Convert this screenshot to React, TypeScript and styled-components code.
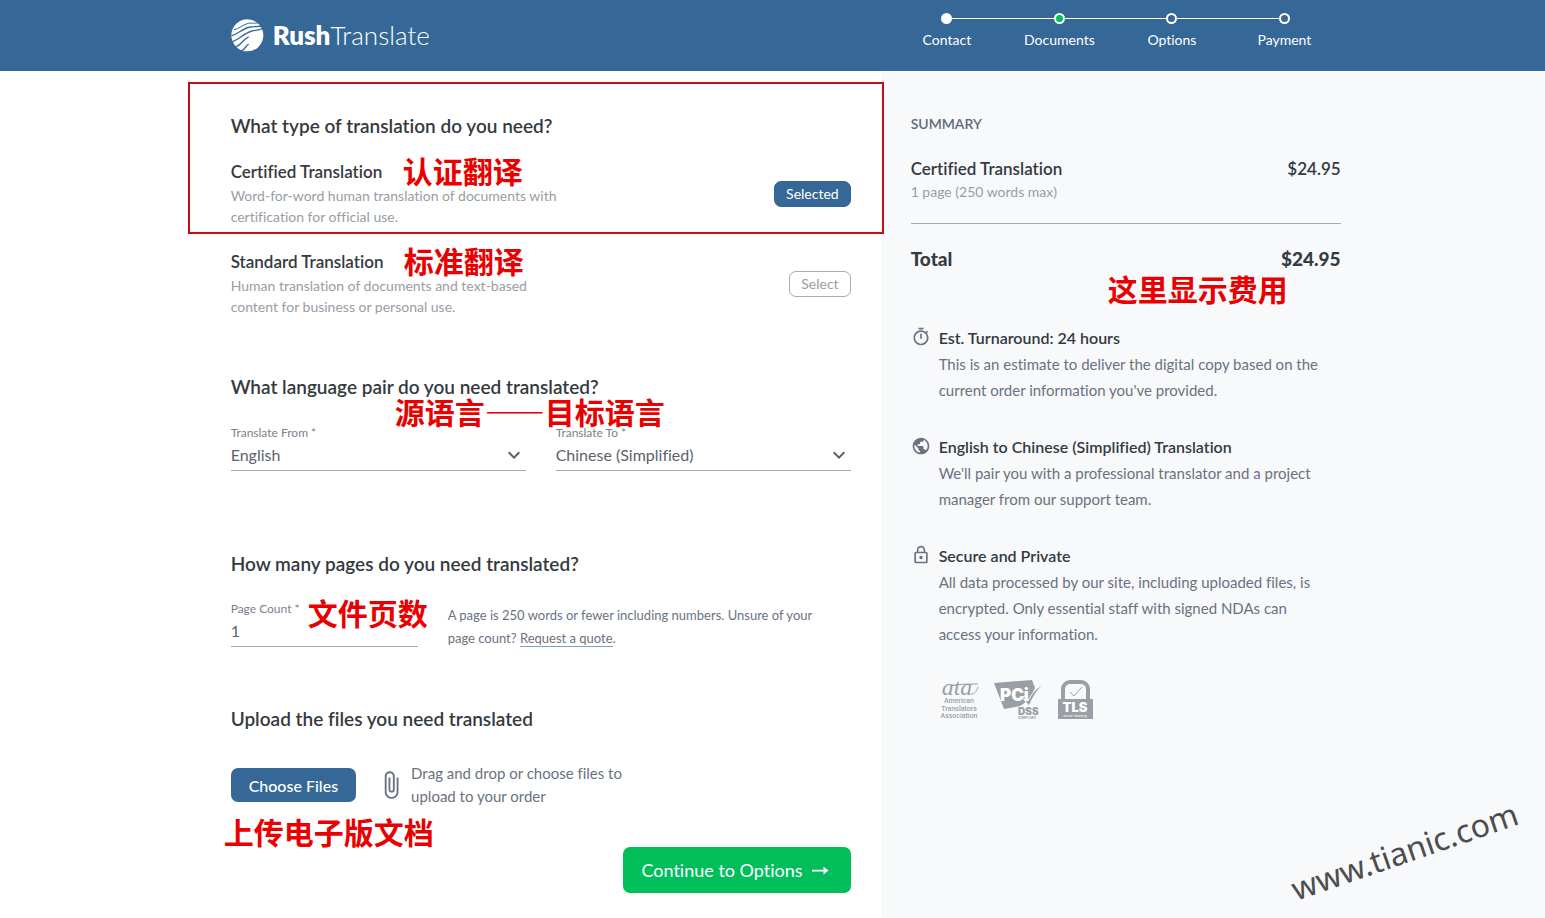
import React from 'react';
import styled, { createGlobalStyle, css } from 'styled-components';
import {
  MdAttachFile,
  MdKeyboardArrowDown,
  MdLockOutline,
  MdOutlineTimer,
  MdPublic,
} from 'react-icons/md';

const blue = '#356896';
const ink = '#343a40';
const muted = '#989da5';
const slate = '#6a7280';
const line = '#a3abb8';
const red = '#ea0000';

const GlobalStyle = createGlobalStyle`
  *, *::before, *::after { box-sizing: border-box; }
  body {
    margin: 0;
    background: #fff;
    color: ${ink};
    font-family: Lato, "Noto Sans CJK SC", sans-serif;
    font-size: 16px;
    font-variant-ligatures: none;
  }
  button, input, select { font: inherit; font-variant-ligatures: none; }
  h1, h2, h3, p, ol, ul, dl, dd { margin: 0; padding: 0; }
  ol, ul { list-style: none; }
`;

const Page = styled.div`
  position: relative;
  display: flex;
  flex-direction: column;
  min-height: 100vh;
  overflow: hidden;
`;

const columns = css`
  display: grid;
  grid-template-columns: 57% 43%;
`;

const Header = styled.header`
  ${columns}
  min-height: 71px;
  background: ${blue};
  color: #fff;
`;

const BrandColumn = styled.div`
  display: flex;
  justify-content: flex-end;
  padding-right: 30px;
`;

const BrandRow = styled.div`
  display: flex;
  align-items: center;
  width: 100%;
  max-width: 620px;
`;

const Brand = styled.a`
  display: flex;
  align-items: center;
  gap: 9px;
  color: #fff;
  font-size: 26px;
  font-weight: 300;
  line-height: 30px;
  text-decoration: none;

  strong { font-weight: 800; }
  span { padding-bottom: 2px; }
`;

const Steps = styled.ol`
  display: grid;
  grid-template-columns: repeat(4, 1fr);
  width: 100%;
  max-width: 460px;
  padding: 13px 0 0 10px;
`;

const Step = styled.li`
  position: relative;
  display: flex;
  flex-direction: column;
  align-items: center;
  gap: 6px;
  font-size: 14px;
  line-height: 20px;

  & + &::before {
    content: '';
    position: absolute;
    top: 5px;
    right: calc(50% + 5px);
    width: calc(100% - 10px);
    height: 1px;
    background: #fff;
  }
`;

const Dot = styled.span<{ $fill: string }>`
  width: 11px;
  height: 11px;
  border: 2px solid #fff;
  border-radius: 50%;
  background: ${(p) => p.$fill};
`;

const Body = styled.div`
  ${columns}
  flex: 1;
`;

const Main = styled.main`
  position: relative;
  z-index: 1;
  display: flex;
  justify-content: flex-end;
  padding: 43px 30px 25px 16px;
`;

const Form = styled.form`
  width: 100%;
  max-width: 620px;
`;

const Section = styled.section<{ $after: number }>`
  position: relative;
  margin-bottom: ${(p) => p.$after}px;
`;

const Heading = styled.h2<{ $gap?: number }>`
  margin-bottom: ${(p) => p.$gap ?? 24}px;
  font-size: 19px;
  font-weight: 600;
  line-height: 24px;
`;

const Options = styled.div`
  display: grid;
  gap: 23px;
`;

const Option = styled.div`
  display: flex;
  align-items: center;
  justify-content: space-between;
  gap: 24px;
`;

const OptionTitle = styled.h3`
  font-size: 17px;
  font-weight: 600;
  line-height: 24px;
`;

const OptionText = styled.p`
  max-width: 350px;
  padding-top: 1px;
  color: ${muted};
  font-size: 14px;
  line-height: 21px;
`;

const Pill = styled.button<{ $active?: boolean }>`
  height: 26px;
  padding: 0 11px;
  border: 1px solid ${(p) => (p.$active ? blue : line)};
  border-radius: 7px;
  background: ${(p) => (p.$active ? blue : '#fff')};
  color: ${(p) => (p.$active ? '#fff' : muted)};
  font-size: 14px;
  line-height: 24px;
`;

const FieldRow = styled.div`
  display: flex;
  gap: 30px;
`;

const Field = styled.div<{ $narrow?: boolean }>`
  position: relative;
  flex: ${(p) => (p.$narrow ? '0 0 187px' : '1 1 0')};
  align-self: flex-start;
  border-bottom: 1px solid #a7a9ad;
  padding-bottom: 4px;
  color: #5b626c;

  label {
    display: block;
    margin-bottom: 3px;
    color: #7b818b;
    font-size: 12px;
    line-height: 16px;
  }

  input,
  select {
    display: block;
    width: 100%;
    height: 22px;
    padding: 0;
    border: 0;
    outline: 0;
    appearance: none;
    background: transparent;
    color: inherit;
    font-size: 16px;
    line-height: 22px;
  }
`;

const Chevron = styled(MdKeyboardArrowDown)`
  position: absolute;
  right: 0;
  bottom: 3px;
  pointer-events: none;
`;

const Note = styled.p`
  flex: 1;
  padding-top: 3px;
  color: ${slate};
  font-size: 13px;
  line-height: 23px;

  a {
    border-bottom: 1px solid #7f9fc0;
    color: inherit;
    text-decoration: none;
  }
`;

const UploadRow = styled.div`
  display: flex;
  align-items: center;
  padding-top: 7px;
  color: ${slate};

  svg { margin: 0 5px 0 20px; }

  p {
    max-width: 240px;
    font-size: 15px;
    line-height: 23px;
  }
`;

const UploadButton = styled.button`
  height: 34px;
  padding: 0 18px;
  border: 0;
  border-radius: 7px;
  background: ${blue};
  color: #fff;
  font-size: 16px;
  font-weight: 500;
`;

const Actions = styled.div`
  display: flex;
  justify-content: flex-end;
`;

const Continue = styled.button`
  display: flex;
  align-items: center;
  gap: 9px;
  height: 46px;
  padding: 0 22px 0 18px;
  border: 0;
  border-radius: 7px;
  background: #00be59;
  color: #fff;
  font-size: 18px;
`;

const Aside = styled.aside`
  position: relative;
  padding: 43px 16px 25px 30px;
  background: #f7f9fb;
`;

const Summary = styled.div`
  max-width: 430px;
`;

const SummaryHeading = styled.h2`
  margin-bottom: 23px;
  color: #616978;
  font-size: 14px;
  font-weight: 600;
  line-height: 20px;
`;

const Amount = styled.div<{ $total?: boolean }>`
  display: flex;
  justify-content: space-between;
  font-size: ${(p) => (p.$total ? 19 : 17)}px;
  font-weight: ${(p) => (p.$total ? 900 : 600)};
  line-height: 24px;
`;

const AmountNote = styled.p`
  margin-top: 1px;
  margin-bottom: 21px;
  color: ${muted};
  font-size: 14px;
  line-height: 20px;
`;

const TotalBlock = styled.div`
  position: relative;
  margin-bottom: 54px;
  padding-top: 23px;
  border-top: 1px solid ${line};
`;

const Features = styled.ul`
  display: grid;
  gap: 31px;
`;

const Feature = styled.li`
  display: flex;
  gap: 8px;
  color: ${slate};

  svg { flex: none; margin-top: 2px; }

  h3 {
    color: ${ink};
    font-size: 16px;
    font-weight: 600;
    line-height: 26px;
  }

  p {
    font-size: 15px;
    line-height: 26px;
  }
`;

const Badges = styled.div`
  display: flex;
  gap: 15px;
  padding: 33px 0 0 28px;

  svg { overflow: visible; }
`;

const Highlight = styled.div`
  position: absolute;
  top: -32px;
  right: -33px;
  left: -43px;
  height: 152px;
  border: 2px solid #c60f14;
  pointer-events: none;
`;

const RemarkText = styled.span<{ $x: number; $y: number }>`
  position: absolute;
  top: ${(p) => p.$y}px;
  left: ${(p) => p.$x}px;
  color: ${red};
  font-family: 'Noto Sans CJK SC', sans-serif;
  font-size: 30px;
  font-weight: 700;
  line-height: 36px;
  white-space: nowrap;
  pointer-events: none;
`;

const Remark = (props: { $x: number; $y: number; children: string }) => (
  <RemarkText lang="zh-CN" {...props} />
);

const Watermark = styled.span`
  position: absolute;
  right: 22px;
  bottom: 47px;
  color: #4d4d4d;
  font-family: 'Noto Sans', sans-serif;
  font-size: 32px;
  line-height: 40px;
  transform: rotate(-19deg);
  pointer-events: none;
`;

const Logo = () => (
  <svg width="33" height="33" viewBox="0 0 99 99" aria-hidden="true">
    <circle cx="49" cy="49" r="48" fill="#fff" />
    <g fill="none" stroke={blue} strokeLinecap="round">
      <path d="M10 32C24 30 34 17 52 13C62 11 72 14 80 12" strokeWidth="3" />
      <path d="M3 50C22 44 36 28 58 24C72 21 84 25 98 19" strokeWidth="4" />
      <path d="M5 68C26 60 38 44 62 36C74 33 86 34 98 27" strokeWidth="4" />
      <path d="M14 84C32 76 36 62 52 54" strokeWidth="4" />
      <path d="M32 96C42 90 44 82 52 76" strokeWidth="4" />
    </g>
  </svg>
);

const Arrow = () => (
  <svg width="17" height="9" viewBox="0 0 17 9" aria-hidden="true">
    <path d="M0 3.7h11.5V.8L16.5 4.6l-5 3.8V5.5H0z" fill="#fff" />
  </svg>
);

const badgeGray = '#9a9fa6';

const AtaBadge = () => (
  <svg width="40" height="40" viewBox="0 0 40 40" role="img" aria-label="American Translators Association">
    <g fill={badgeGray} textAnchor="middle">
      <text x="18" y="15" fontFamily="Liberation Serif, serif" fontStyle="italic" fontSize="24">ata</text>
      <path d="M11 6c9-2 18-2 28-2M32 14c4 0 6-4 7-7" fill="none" stroke={badgeGray} strokeWidth="1" />
      <g fontFamily="Roboto, sans-serif" fontSize="7" fontWeight="500">
        <text x="20" y="23">American</text>
        <text x="20" y="31">Translators</text>
        <text x="20" y="38">Association</text>
      </g>
    </g>
  </svg>
);

const PciBadge = () => (
  <svg width="49" height="40" viewBox="0 0 49 40" role="img" aria-label="PCI DSS compliant">
    <path d="M0 3L38 0l3 8-6 12-9 6-16 3z" fill={badgeGray} />
    <path d="M28 17l3-1 3 5c4-8 8-13 15-16-6 5-10 12-14 21z" fill={badgeGray} stroke="#f7f9fb" strokeWidth="1" />
    <text x="6" y="21" fill="#fff" fontFamily="Inter, sans-serif" fontWeight="900" fontSize="17">PCi</text>
    <text x="24" y="35" fill={badgeGray} fontFamily="Inter, sans-serif" fontWeight="900" fontSize="10">DSS</text>
    <text x="24" y="39" fill={badgeGray} fontFamily="Inter, sans-serif" fontWeight="700" fontSize="3">COMPLIANT</text>
  </svg>
);

const TlsBadge = () => (
  <svg width="36" height="40" viewBox="0 0 36 40" role="img" aria-label="TLS secure shopping">
    <path d="M5 20V9a7 7 0 0 1 7-7h11a7 7 0 0 1 7 7v11" fill="none" stroke={badgeGray} strokeWidth="4" />
    <path d="M12 12l4 4 8-9" fill="none" stroke={badgeGray} strokeWidth="1" />
    <rect x="0" y="19" width="35" height="20" fill={badgeGray} />
    <text x="17" y="32" fill="#fff" fontFamily="Inter, sans-serif" fontWeight="900" fontSize="13" textAnchor="middle">TLS</text>
    <text x="17" y="37" fill="#fff" fontFamily="Inter, sans-serif" fontSize="3" textAnchor="middle">secure shopping</text>
  </svg>
);

const steps = [
  { name: 'Contact', fill: '#fff' },
  { name: 'Documents', fill: '#00be59' },
  { name: 'Options', fill: blue },
  { name: 'Payment', fill: blue },
];

const features = [
  {
    Icon: MdOutlineTimer,
    title: 'Est. Turnaround: 24 hours',
    text: ['This is an estimate to deliver the digital copy based on the', "current order information you've provided."],
  },
  {
    Icon: MdPublic,
    title: 'English to Chinese (Simplified) Translation',
    text: ["We'll pair you with a professional translator and a project", 'manager from our support team.'],
  },
  {
    Icon: MdLockOutline,
    title: 'Secure and Private',
    text: ['All data processed by our site, including uploaded files, is', 'encrypted. Only essential staff with signed NDAs can', 'access your information.'],
  },
];

const Lines = ({ of }: { of: string[] }) => (
  <>
    {of.map((text, i) => (
      <React.Fragment key={text}>
        {i > 0 && <br />}
        {text}
      </React.Fragment>
    ))}
  </>
);

export default function App() {
  return (
    <Page>
      <GlobalStyle />
      <Header>
        <BrandColumn>
          <BrandRow>
            <Brand href="#">
              <Logo />
              <span><strong>Rush</strong>Translate</span>
            </Brand>
          </BrandRow>
        </BrandColumn>
        <Steps>
          {steps.map((s) => (
            <Step key={s.name}>
              <Dot $fill={s.fill} />
              {s.name}
            </Step>
          ))}
        </Steps>
      </Header>

      <Body>
        <Main>
          <Form onSubmit={(e) => e.preventDefault()}>
            <Section $after={58}>
              <Heading $gap={22}>What type of translation do you need?</Heading>
              <Options>
                <Option>
                  <div>
                    <OptionTitle>Certified Translation</OptionTitle>
                    <OptionText>
                      <Lines of={['Word-for-word human translation of documents with', 'certification for official use.']} />
                    </OptionText>
                  </div>
                  <Pill type="button" $active>Selected</Pill>
                </Option>
                <Option>
                  <div>
                    <OptionTitle>Standard Translation</OptionTitle>
                    <OptionText>
                      <Lines of={['Human translation of documents and text-based', 'content for business or personal use.']} />
                    </OptionText>
                  </div>
                  <Pill type="button">Select</Pill>
                </Option>
              </Options>
              <Highlight />
              <Remark $x={172} $y={38}>认证翻译</Remark>
              <Remark $x={173} $y={128}>标准翻译</Remark>
            </Section>

            <Section $after={81}>
              <Heading $gap={26}>What language pair do you need translated?</Heading>
              <FieldRow>
                <Field>
                  <label htmlFor="from">Translate From *</label>
                  <select id="from" defaultValue="English">
                    <option>English</option>
                  </select>
                  <Chevron size={24} />
                </Field>
                <Field>
                  <label htmlFor="to">Translate To *</label>
                  <select id="to" defaultValue="Chinese (Simplified)">
                    <option>Chinese (Simplified)</option>
                  </select>
                  <Chevron size={24} />
                </Field>
              </FieldRow>
              <Remark $x={164} $y={18}>源语言——目标语言</Remark>
            </Section>

            <Section $after={57}>
              <Heading $gap={25}>How many pages do you need translated?</Heading>
              <FieldRow>
                <Field $narrow>
                  <label htmlFor="pages">Page Count *</label>
                  <input id="pages" type="text" inputMode="numeric" defaultValue="1" />
                </Field>
                <Note>
                  A page is 250 words or fewer including numbers. Unsure of your<br />
                  page count? <a href="#quote">Request a quote</a>.
                </Note>
              </FieldRow>
              <Remark $x={77} $y={42}>文件页数</Remark>
            </Section>

            <Section $after={39}>
              <Heading>Upload the files you need translated</Heading>
              <UploadRow>
                <UploadButton type="button">Choose Files</UploadButton>
                <MdAttachFile size={30} />
                <p>
                  <Lines of={['Drag and drop or choose files to', 'upload to your order']} />
                </p>
              </UploadRow>
              <Remark $x={-7} $y={106}>上传电子版文档</Remark>
            </Section>

            <Actions>
              <Continue type="submit">
                Continue to Options
                <Arrow />
              </Continue>
            </Actions>
          </Form>
        </Main>

        <Aside>
          <Summary>
            <SummaryHeading>SUMMARY</SummaryHeading>
            <Amount>
              <span>Certified Translation</span>
              <span>$24.95</span>
            </Amount>
            <AmountNote>1 page (250 words max)</AmountNote>
            <TotalBlock>
              <Amount $total>
                <span>Total</span>
                <span>$24.95</span>
              </Amount>
              <Remark $x={197} $y={46}>这里显示费用</Remark>
            </TotalBlock>
            <Features>
              {features.map(({ Icon, title, text }) => (
                <Feature key={title}>
                  <Icon size={20} />
                  <div>
                    <h3>{title}</h3>
                    <p><Lines of={text} /></p>
                  </div>
                </Feature>
              ))}
            </Features>
            <Badges>
              <AtaBadge />
              <PciBadge />
              <TlsBadge />
            </Badges>
          </Summary>
        </Aside>
      </Body>
      <Watermark>www.tianic.com</Watermark>
    </Page>
  );
}
